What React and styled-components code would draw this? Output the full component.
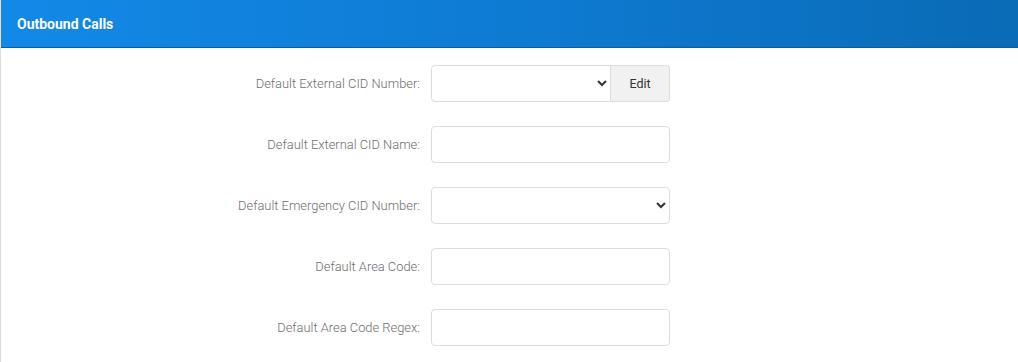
import styled, { createGlobalStyle } from "styled-components";

const GlobalStyle = createGlobalStyle`
  body {
    margin: 0;
    background: #ffffff;
    font-family: Roboto, "Liberation Sans", sans-serif;
  }
`;

const fields = [
  { label: "Default External CID Number:", type: "select", edit: true },
  { label: "Default External CID Name:", type: "text" },
  { label: "Default Emergency CID Number:", type: "select" },
  { label: "Default Area Code:", type: "text" },
  { label: "Default Area Code Regex:", type: "text" },
];

export default function App() {
  return (
    <>
      <GlobalStyle />
      <Painel>
        <Cabecalho>
          <h3>Outbound Calls</h3>
        </Cabecalho>
        <Corpo>
          {fields.map((f) => (
            <Linha key={f.label}>
              <Rotulo>{f.label}</Rotulo>
              <Grupo>
                {f.type === "select" ? (
                  <Selecao $joined={f.edit}>
                    <option value=""></option>
                  </Selecao>
                ) : (
                  <Campo type="text" />
                )}
                {f.edit && <BotaoEditar type="button">Edit</BotaoEditar>}
              </Grupo>
            </Linha>
          ))}
        </Corpo>
      </Painel>
    </>
  );
}

const Painel = styled.div`
  width: 100%;
  height: 362px;
  overflow: hidden;
  box-sizing: border-box;
  border-left: 1px solid #dedede;
`;

const Cabecalho = styled.div`
  height: 48px;
  box-sizing: border-box;
  margin-left: -1px;
  padding: 1px 0 0 17px;
  display: flex;
  align-items: center;
  background: linear-gradient(90deg, #1389e7 0%, #0e7bd3 50%, #0a6bb6 100%);
  border-bottom: 1px solid #0a5e9f;

  h3 {
    margin: 0;
    color: #ffffff;
    font-size: 14px;
    font-weight: 700;
  }
`;

const Corpo = styled.div`
  padding-top: 17px;
  display: flex;
  flex-direction: column;
  gap: 24px;
`;

const Linha = styled.div`
  display: grid;
  grid-template-columns: 419px 239px;
  column-gap: 11px;
  align-items: center;
`;

const Rotulo = styled.label`
  text-align: right;
  font-size: 12.9px;
  font-weight: 300;
  color: #6e6e6e;
`;

const Grupo = styled.div`
  display: flex;
  height: 37px;
`;

const Campo = styled.input`
  flex: 1;
  min-width: 0;
  box-sizing: border-box;
  height: 37px;
  border: 1px solid #dddddd;
  border-radius: 4px;
  background: #ffffff;
  outline: none;
  padding: 0 10px;
`;

const Selecao = styled.select`
  flex: 1;
  min-width: 0;
  box-sizing: border-box;
  height: 37px;
  border: 1px solid #dddddd;
  border-radius: ${(p) => (p.$joined ? "4px 0 0 4px" : "4px")};
  background: #ffffff;
  color: #333333;
  padding: 0 6px;
  outline: none;
`;

const BotaoEditar = styled.button`
  width: 59px;
  box-sizing: border-box;
  height: 37px;
  border: 1px solid #dddddd;
  border-left: none;
  border-radius: 0 4px 4px 0;
  background: #f1f1f1;
  color: #333333;
  font-family: Roboto, "Liberation Sans", sans-serif;
  font-size: 12.5px;
`;
